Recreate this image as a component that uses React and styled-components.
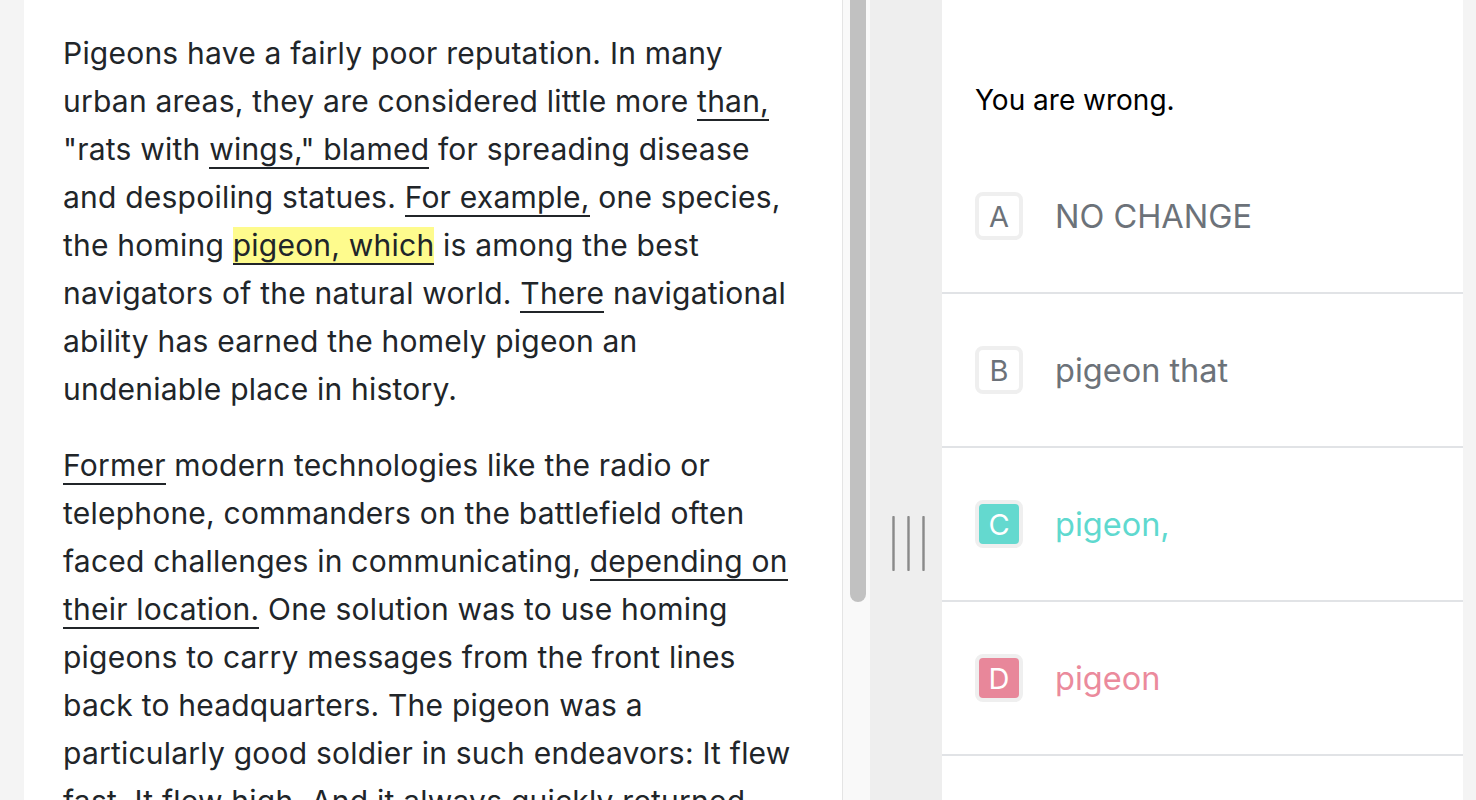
import React from 'react'
import styled, { createGlobalStyle } from 'styled-components'

const GlobalStyle = createGlobalStyle`
  html, body {
    margin: 0;
    padding: 0;
    height: 100%;
    overflow: hidden;
    background: #f4f4f4;
  }
  * {
    box-sizing: border-box;
  }
`

const options = [
  { letter: 'A', text: 'NO CHANGE', state: 'idle' },
  { letter: 'B', text: 'pigeon that', state: 'idle' },
  { letter: 'C', text: 'pigeon,', state: 'correct' },
  { letter: 'D', text: 'pigeon', state: 'wrong' },
]

const App = () => {
  return (
    <>
      <GlobalStyle />
      <Wrapper>
        <Passage>
          <Paragraph>
            Pigeons have a fairly poor reputation. In many urban areas, they are
            considered little more <Marked>than,</Marked> "rats with{' '}
            <Marked>wings," blamed</Marked> for spreading disease and despoiling
            statues. <Marked>For example,</Marked> one species, the homing{' '}
            <Marked $active>pigeon, which</Marked> is among the best navigators of
            the natural world. <Marked>There</Marked> navigational ability has
            earned the homely pigeon an undeniable place in history.
          </Paragraph>
          <Paragraph>
            <Marked>Former</Marked> modern technologies like the radio or
            telephone, commanders on the battlefield often faced challenges in
            communicating, <Marked>depending on their location.</Marked> One
            solution was to use homing pigeons to carry messages from the front
            lines back to headquarters. The pigeon was a particularly good soldier
            in such endeavors: It flew fast. It flew high. And it always quickly
            returned home.
          </Paragraph>
        </Passage>
        <Scrollbar>
          <Thumb />
        </Scrollbar>
        <Divider>
          <Grip>
            <GripLine />
            <GripLine />
            <GripLine />
          </Grip>
        </Divider>
        <Answers>
          <Feedback>You are wrong.</Feedback>
          {options.map((o) => (
            <Option key={o.letter}>
              <Letter $state={o.state}>{o.letter}</Letter>
              <Choice $state={o.state}>{o.text}</Choice>
            </Option>
          ))}
        </Answers>
      </Wrapper>
    </>
  )
}

const Wrapper = styled.main`
  display: flex;
  height: 100vh;
  padding: 0 13px 0 24px;
  background: #f4f4f4;
  font-family: Inter, 'Noto Sans', sans-serif;
`

const Passage = styled.section`
  width: 819px;
  flex-shrink: 0;
  background: #fff;
  border-right: 1px solid #e4e4e4;
  padding: 29px 44px 0 39px;
  overflow: hidden;
`

const Paragraph = styled.p`
  margin: 0 0 28px;
  font-size: 30px;
  line-height: 48px;
  letter-spacing: 0.22px;
  color: #212529;
`

const Marked = styled.span`
  border-bottom: 2px solid #212529;
  background: ${(p) => (p.$active ? '#fefb8d' : 'transparent')};
`

const Scrollbar = styled.div`
  width: 27px;
  flex-shrink: 0;
  background: #f9f9f9;
  padding-left: 7px;
`

const Thumb = styled.div`
  width: 16px;
  height: 602px;
  background: #c1c1c1;
  border-radius: 0 0 8px 8px;
`

const Divider = styled.div`
  width: 72px;
  flex-shrink: 0;
  background: #eeeeee;
  padding: 516px 0 0 22px;
`

const Grip = styled.div`
  display: flex;
  gap: 12px;
`

const GripLine = styled.span`
  width: 3px;
  height: 55px;
  background: linear-gradient(90deg, #b5b5b5, #8a8a8a, #b5b5b5);
  border-radius: 1px;
`

const Answers = styled.section`
  flex: 1;
  background: #fff;
  overflow: hidden;
`

const Feedback = styled.div`
  padding: 84px 0 24px 33px;
  font-size: 28px;
  line-height: 32px;
  color: #000;
`

const Option = styled.div`
  display: flex;
  align-items: center;
  gap: 32px;
  height: 154px;
  padding-left: 33px;
  border-bottom: 2px solid #e1e3e6;
`

const fills = { idle: '#fff', correct: '#64d9cf', wrong: '#e8879a' }
const tones = { idle: '#6c7279', correct: '#5fd9cf', wrong: '#eb8a9c' }

const Letter = styled.span`
  display: flex;
  align-items: center;
  justify-content: center;
  width: 48px;
  height: 48px;
  border: 4px solid #efefef;
  border-radius: 8px;
  font-size: 29px;
  color: ${(p) => (p.$state === 'idle' ? '#6c7279' : '#fff')};
  background: ${(p) => fills[p.$state]};
`

const Choice = styled.span`
  font-size: 32.5px;
  color: ${(p) => tones[p.$state]};
`

export default App
